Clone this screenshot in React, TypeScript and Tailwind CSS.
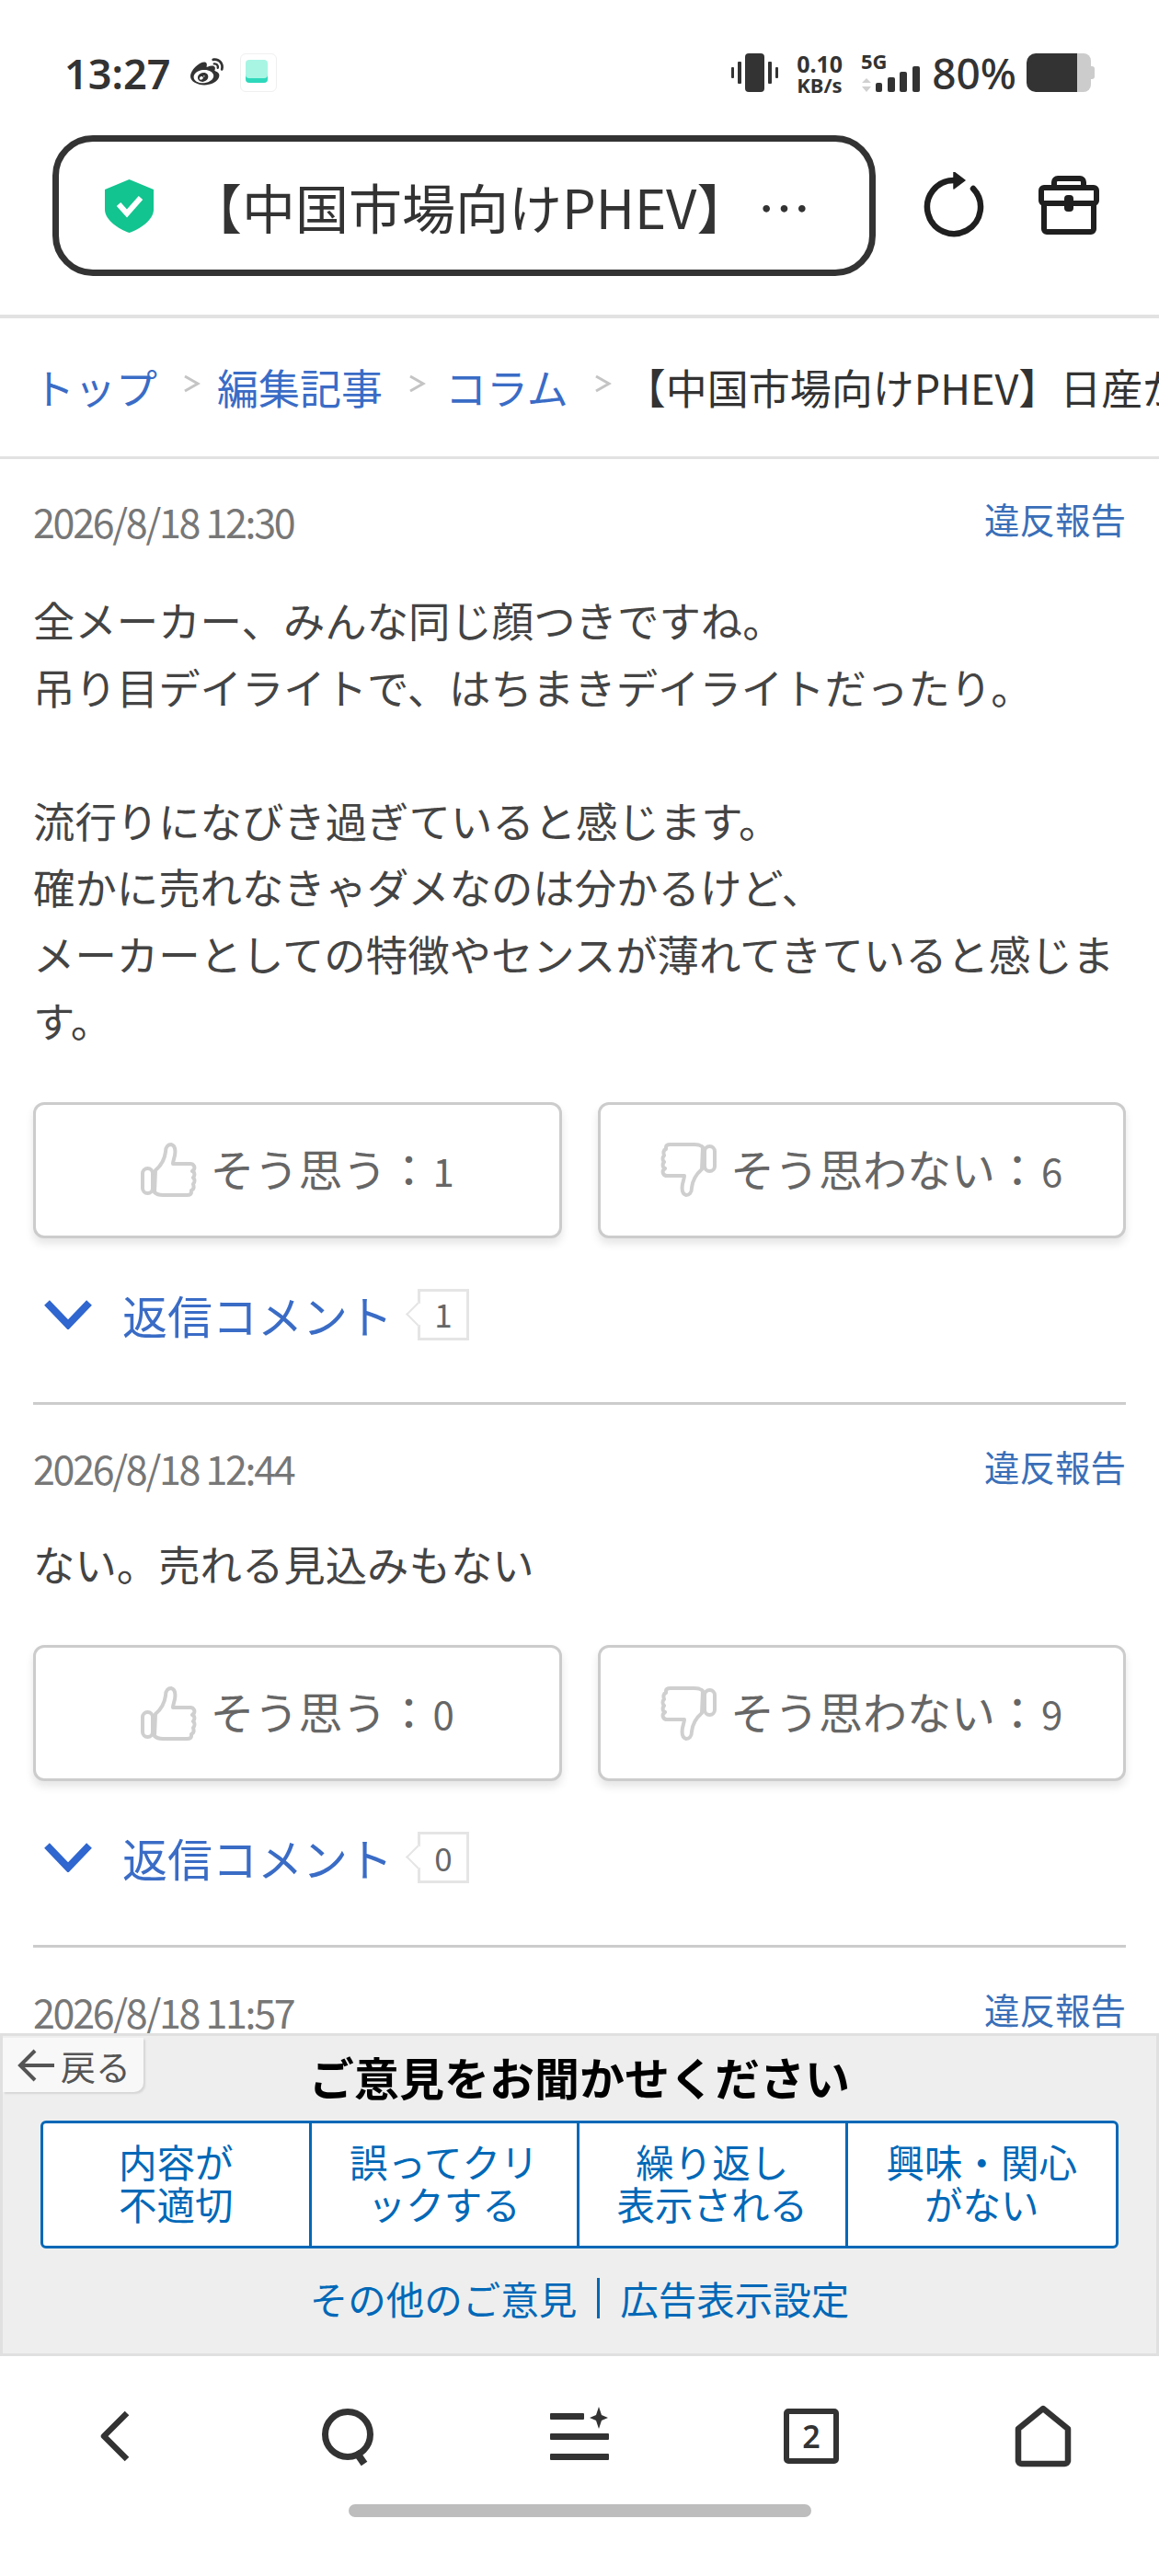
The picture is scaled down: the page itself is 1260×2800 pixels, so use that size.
import React from "react";
import { FaWeibo } from "react-icons/fa";

const cjk = "font-['Noto_Sans_CJK_JP','Noto_Sans',sans-serif]";

function Thumb({ down }: { down?: boolean }) {
  return (
    <svg width="61" height="59" viewBox="0 0 61 59" fill="none" stroke="#cfcfcf" strokeWidth="4" strokeLinejoin="round" className={down ? "rotate-180 shrink-0" : "shrink-0"}>
      <rect x="2" y="28" width="11" height="27" rx="5.5" />
      <path d="M16 30C22 25 26 18 27 10C27 4 30 2 33 2C37 3 38 8 37 14C36 18 35 21 35 23L54 23C58 23 59 27 58 29C57 30 56 31 56 31C59 32 59 36 57 38C59 40 59 43 57 45C58 48 58 51 55 52L55 54C55 56 53 57 50 57L24 57C20 57 17 56 15 54Z" />
    </svg>
  );
}

function VoteButton({ label, count, down }: { label: string; count: number; down?: boolean }) {
  return (
    <div className="flex-1 h-[148px] rounded-[12px] border-[3px] border-[#cccccc] bg-white shadow-[0_6px_10px_rgba(0,0,0,0.1)] flex items-center justify-center gap-[15px] text-[48px] text-[#666666]">
      <Thumb down={down} />
      <span className="flex items-baseline -mt-[6px]">
        {label}
        <span className="text-[42px] ml-[2px]">{count}</span>
      </span>
    </div>
  );
}

function DateRow({ date }: { date: string }) {
  return (
    <div className="flex justify-between items-center h-[58px]">
      <span className="text-[43px] text-[#777777] tracking-[-2.3px] whitespace-nowrap">{date}</span>
      <span className="text-[38.5px] text-[#3a6fb8] -mt-[4px]">違反報告</span>
    </div>
  );
}

function Comment({ date, count, up, down, top, gap, children }: { date: string; count: number; up: number; down: number; top: string; gap: string; children: React.ReactNode }) {
  return (
    <section className={`mx-[36px] ${top} pb-[65px] border-b-[3px] border-[#cccccc]`}>
      <DateRow date={date} />
      <div className={`${gap} text-[45.4px] leading-[72.5px] text-[#444444]`}>{children}</div>
      <div className="mt-[53px] flex gap-[39px]">
        <VoteButton label="そう思う：" count={up} />
        <VoteButton label="そう思わない：" count={down} down />
      </div>
      <div className="mt-[53px] h-[60px] flex items-center pl-[12px]">
        <svg width="52" height="32" viewBox="0 0 52 32" fill="none" stroke="#2f66cf" strokeWidth="8" className="shrink-0">
          <path d="M3 3L26 27L49 3" />
        </svg>
        <span className="ml-[33px] text-[49px] text-[#3a6cc6] whitespace-nowrap">返信コメント</span>
        <span className="relative ml-[27px] w-[56px] h-[56px] border-[3px] border-[#e5e5e5] bg-white flex items-center justify-center text-[35px] text-[#666666]">
          <span className="absolute -left-[12px] top-[15px] w-[19px] h-[19px] rotate-45 border-l-[2px] border-b-[2px] border-[#e5e5e5] bg-white" />
          <span className="relative">{count}</span>
        </span>
      </div>
    </section>
  );
}

function StatusBar() {
  return (
    <div className="h-[147px] pl-[70px] pr-[70px] pt-[58px] flex items-start justify-between text-[#333333] font-['Noto_Sans',sans-serif]">
      <div className="flex items-center h-[42px]">
        <span className="text-[45px] font-semibold leading-none">13:27</span>
        <FaWeibo className="ml-[20px] w-[40px] h-[36px]" />
        <span className="ml-[16px] w-[40px] h-[42px] rounded-[6px] border border-[#f0f0f0] relative">
          <span className="absolute left-[5px] top-[9px] w-[24px] h-[22px] rounded-[4px] bg-[#2ed8bb]" />
          <span className="absolute left-[5px] top-[6px] w-[24px] h-[20px] rounded-[4px] bg-[#a8f5e4]" />
        </span>
      </div>
      <div className="flex items-start h-[42px]">
        <svg width="51" height="42" viewBox="0 0 51 42" fill="#333333">
          <rect x="15" y="0" width="21" height="42" rx="4" />
          <rect x="7" y="9" width="4" height="24" rx="1" />
          <rect x="40" y="9" width="4" height="24" rx="1" />
          <rect x="0" y="15" width="3" height="12" rx="1" />
          <rect x="48" y="15" width="3" height="12" rx="1" />
        </svg>
        <div className="ml-[20px] w-[50px] flex flex-col font-bold">
          <span className="text-[25px] leading-[22px]">0.10</span>
          <span className="text-[22px] leading-[24px] whitespace-nowrap">KB/s</span>
        </div>
        <svg width="64" height="42" viewBox="0 0 64 42" className="ml-[20px]" fill="#333333">
          <text x="0" y="17" fontSize="22" fontWeight="700" fontFamily="Noto Sans">5G</text>
          <path d="M6 27L11 32H1ZM6 42L1 36H11Z" fill="#d0d0d0" />
          <rect x="16" y="32" width="7" height="10" rx="2" />
          <rect x="29" y="26" width="8" height="16" rx="2" />
          <rect x="42" y="20" width="8" height="22" rx="2" />
          <rect x="56" y="14" width="8" height="28" rx="2" />
        </svg>
        <span className="ml-[13px] text-[46px] leading-[42px] font-medium">80%</span>
        <span className="ml-[11px] flex items-center h-[42px]">
          <span className="w-[55px] h-[42px] rounded-l-[10px] bg-[#333333]" />
          <span className="w-[15px] h-[42px] rounded-r-[8px] bg-[#cccccc]" />
          <span className="w-[4px] h-[14px] rounded-r-[3px] bg-[#cccccc]" />
        </span>
      </div>
    </div>
  );
}

function AddressRow() {
  return (
    <div className="h-[199px] pl-[57px] border-b-[4px] border-[#e2e2e2]">
      <div className="flex items-start">
        <div className="w-[895px] h-[153px] rounded-[44px] border-[7px] border-[#333333] flex items-center pl-[50px]">
          <svg width="53" height="58" viewBox="0 0 53 58" className="shrink-0">
            <path d="M26.5 0L53 11V33C53 44 38 54 26.5 58C15 54 0 44 0 33V11Z" fill="#12c48f" />
            <path d="M15 27L24 37L39 20" fill="none" stroke="#ffffff" strokeWidth="6" />
          </svg>
          <span className="ml-[38px] text-[58px] leading-none text-[#333333] whitespace-nowrap">【中国市場向けPHEV】<span className="ml-[8px]">…</span></span>
        </div>
        <svg width="72" height="72" viewBox="0 0 72 72" fill="none" stroke="#1f1f1f" strokeWidth="6.5" className="ml-[48px] mt-[40px] shrink-0">
          <path d="M58 18A29 29 0 1 1 37 9" strokeLinecap="round" />
          <path d="M37 0L49 9L37 18Z" fill="#1f1f1f" stroke="#1f1f1f" strokeWidth="1.5" strokeLinejoin="round" />
        </svg>
        <svg width="66" height="64" viewBox="0 0 66 64" fill="none" stroke="#1f1f1f" strokeWidth="6" className="ml-[57px] mt-[44px] shrink-0" strokeLinejoin="round">
          <path d="M17 11V7A4 4 0 0 1 21 3H45A4 4 0 0 1 49 7V11" />
          <rect x="3" y="13" width="60" height="17" rx="3" />
          <path d="M6 30V58A3 3 0 0 0 9 61H57A3 3 0 0 0 60 58V30" />
          <rect x="28" y="21" width="10" height="18" rx="4" fill="#1f1f1f" stroke="none" />
        </svg>
      </div>
    </div>
  );
}

function Breadcrumb() {
  const Sep = () => (
    <svg width="19" height="20" viewBox="0 0 19 20" fill="none" stroke="#c4c4c4" strokeWidth="3" className="shrink-0 -mt-[8px]">
      <path d="M2 2L16 10L2 18" />
    </svg>
  );
  return (
    <div className="h-[153px] pl-[36px] border-b-[3px] border-[#e2e2e2] flex items-center overflow-hidden whitespace-nowrap text-[45px] text-[#3a6cc6]">
      <span>トップ</span>
      <span className="ml-[28px] mr-[18px] flex"><Sep /></span>
      <span>編集記事</span>
      <span className="ml-[28px] mr-[21px] flex"><Sep /></span>
      <span>コラム</span>
      <span className="ml-[28px] mr-[14px] flex"><Sep /></span>
      <span className="text-[#333333]">【中国市場向けPHEV】日産が</span>
    </div>
  );
}

function AdPanel() {
  const items = [
    ["内容が", "不適切"],
    ["誤ってクリ", "ックする"],
    ["繰り返し", "表示される"],
    ["興味・関心", "がない"],
  ];
  return (
    <div className="h-[351px] bg-[#eeeeee] border-[3px] border-[#e0e0e0] flex flex-col shrink-0 text-[#0068b7]">
      <div className="flex h-[92px]">
        <div className="w-[153px] h-[59px] mt-[2px] bg-[#f8f8f8] rounded-br-[10px] shadow-[2px_2px_2px_rgba(0,0,0,0.1)] flex items-center pl-[16px] text-[38px] text-[#555555]">
          <svg width="40" height="36" viewBox="0 0 40 36" fill="none" stroke="#555555" strokeWidth="4" className="shrink-0">
            <path d="M19 2L3 18L19 34M3 18H40" />
          </svg>
          <span className="ml-[7px]">戻る</span>
        </div>
        <div className="ml-[180px] mt-[14px] text-[49px] leading-[60px] font-bold text-black whitespace-nowrap">ご意見をお聞かせください</div>
      </div>
      <div className="mx-[41px] h-[139px] grid grid-cols-4 rounded-[6px] border-[3px] border-[#0068b7] bg-white divide-x-[3px] divide-[#0068b7]">
        {items.map((lines, i) => (
          <div key={i} className="flex flex-col items-center justify-center pb-[5px] text-[41.5px] leading-[46px]">
            <span>{lines[0]}</span>
            <span>{lines[1]}</span>
          </div>
        ))}
      </div>
      <div className="mt-[24px] flex items-center justify-center text-[41.5px] leading-[60px]">
        <span>その他のご意見</span>
        <span className="mx-[22px] w-[3px] h-[44px] bg-[#0068b7]" />
        <span>広告表示設定</span>
      </div>
    </div>
  );
}

function BottomNav() {
  const stroke = "#333333";
  return (
    <div className="h-[239px] bg-white shrink-0 flex flex-col">
      <div className="h-[174px] grid grid-cols-5 items-center">
        <div className="flex justify-center">
          <svg width="70" height="70" viewBox="0 0 70 70" fill="none" stroke={stroke} strokeWidth="6.5" strokeLinejoin="round">
            <path d="M47 10L22 35L47 60" />
          </svg>
        </div>
        <div className="flex justify-center">
          <svg width="70" height="70" viewBox="0 0 70 70" fill="none" stroke={stroke} strokeWidth="7">
            <circle cx="35" cy="33" r="24.5" />
            <path d="M44 52L53 65" strokeWidth="8" />
          </svg>
        </div>
        <div className="flex justify-center">
          <svg width="70" height="70" viewBox="0 0 70 70" fill={stroke}>
            <rect x="3" y="10" width="37" height="7" rx="1" />
            <rect x="3" y="32" width="64" height="7" rx="1" />
            <rect x="3" y="54" width="64" height="7" rx="1" />
            <path d="M56 3L59 12L66 15L59 18L56 27L53 18L46 15L53 12Z" />
          </svg>
        </div>
        <div className="flex justify-center">
          <span className="w-[60px] h-[60px] rounded-[5px] border-[6px] border-[#333333] flex items-center justify-center text-[34px] leading-none text-[#333333] font-['Noto_Sans',sans-serif] font-semibold">2</span>
        </div>
        <div className="flex justify-center">
          <svg width="70" height="70" viewBox="0 0 70 70" fill="none" stroke={stroke} strokeWidth="6.5" strokeLinejoin="round">
            <path d="M35 5L62 27V62A4 4 0 0 1 58 65H12A4 4 0 0 1 8 62V27Z" />
          </svg>
        </div>
      </div>
      <div className="mt-[-13px] mx-auto w-[503px] h-[14px] rounded-full bg-[#bdbdbd]" />
    </div>
  );
}

export default function App() {
  return (
    <div className={`w-[1260px] h-[2800px] bg-white overflow-hidden flex flex-col ${cjk}`}>
      <StatusBar />
      <AddressRow />
      <Breadcrumb />
      <main className="flex-1 min-h-0 overflow-hidden">
        <Comment date="2026/8/18 12:30" count={1} up={1} down={6} top="pt-[38px]" gap="mt-[42px]">
          全メーカー、みんな同じ顔つきですね。<br />
          吊り目デイライトで、はちまきデイライトだったり。<br />
          <br />
          流行りになびき過ぎていると感じます。<br />
          確かに売れなきゃダメなのは分かるけど、<br />
          メーカーとしての特徴やセンスが薄れてきていると感じます。
        </Comment>
        <Comment date="2026/8/18 12:44" count={0} up={0} down={9} top="pt-[40px]" gap="mt-[38px]">
          ない。売れる見込みもない
        </Comment>
        <section className="mx-[36px] pt-[40px]">
          <DateRow date="2026/8/18 11:57" />
        </section>
      </main>
      <AdPanel />
      <BottomNav />
    </div>
  );
}
